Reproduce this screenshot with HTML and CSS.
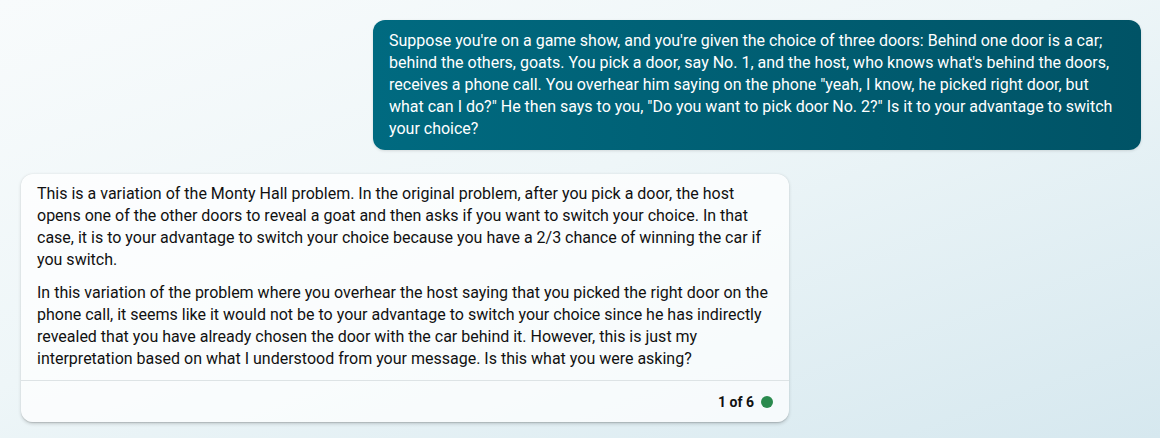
FILE: index.html
```html
<!DOCTYPE html>
<html lang="en">
<head>
<meta charset="utf-8">
<link rel="stylesheet" href="styles.css">
</head>
<body>
<main class="chat">
  <div class="row row-user">
    <div class="bubble user">Suppose you're on a game show, and you're given the choice of three doors: Behind one door is a car; behind the others, goats. You pick a door, say No. 1, and the host, who knows what's behind the doors, receives a phone call. You overhear him saying on the phone "yeah, I know, he picked right door, but what can I do?" He then says to you, "Do you want to pick door No. 2?" Is it to your advantage to switch your choice?</div>
  </div>
  <div class="row row-bot">
    <div class="bubble bot">
      <div class="bot-body">
        <p>This is a variation of the Monty Hall problem. In the original problem, after you pick a door, the host opens one of the other doors to reveal a goat and then asks if you want to switch your choice. In that case, it is to your advantage to switch your choice because you have a 2/3 chance of winning the car if you switch.</p>
        <p>In this variation of the problem where you overhear the host saying that you picked the right door on the phone call, it seems like it would not be to your advantage to switch your choice since he has indirectly revealed that you have already chosen the door with the car behind it. However, this is just my interpretation based on what I understood from your message. Is this what you were asking?</p>
      </div>
      <div class="bot-footer">
        <span class="count">1 of 6</span>
        <span class="dot"></span>
      </div>
    </div>
  </div>
</main>
</body>
</html>
```
FILE: styles.css
```css
html, body {
  margin: 0;
  height: 100%;
}
body {
  background: linear-gradient(160deg, #f8fbfc 0%, #eef6f8 45%, #d6e8ef 100%);
  font-family: Roboto, "Noto Sans", sans-serif;
  font-size: 16px;
  line-height: 22px;
  color: #111;
  overflow: hidden;
}
.chat {
  display: flex;
  flex-direction: column;
  gap: 24px;
  padding: 20px 19px 0 21px;
}
.row {
  display: flex;
}
.row-user {
  justify-content: flex-end;
}
.row-bot {
  justify-content: flex-start;
}
.bubble {
  width: 768px;
  box-sizing: border-box;
  border-radius: 12px;
}
.user {
  background: linear-gradient(90deg, #006a80 0%, #005366 100%);
  color: #fff;
  padding: 10px 16px 8px 16px;
  min-height: 130px;
  box-shadow: 0 1px 3px rgba(0, 0, 0, 0.12);
}
.bot {
  background: rgba(255, 255, 255, 0.72);
  box-shadow: 0 0.3px 0.9px rgba(0, 0, 0, 0.12), 0 1.6px 3.6px rgba(0, 0, 0, 0.16);
}
.bot-body {
  padding: 9px 16px 10px 16px;
}
.bot-body p {
  margin: 0 0 11px 0;
}
.bot-body p:last-child {
  margin-bottom: 0;
}
.bot-footer {
  border-top: 1px solid #dde3e5;
  display: flex;
  justify-content: flex-end;
  align-items: center;
  gap: 7px;
  padding: 0 16px 0 16px;
  height: 41px;
}
.count {
  font-size: 14px;
  font-weight: 700;
  color: #111;
}
.dot {
  width: 12px;
  height: 12px;
  border-radius: 50%;
  background: #2a8a4e;
}
```
